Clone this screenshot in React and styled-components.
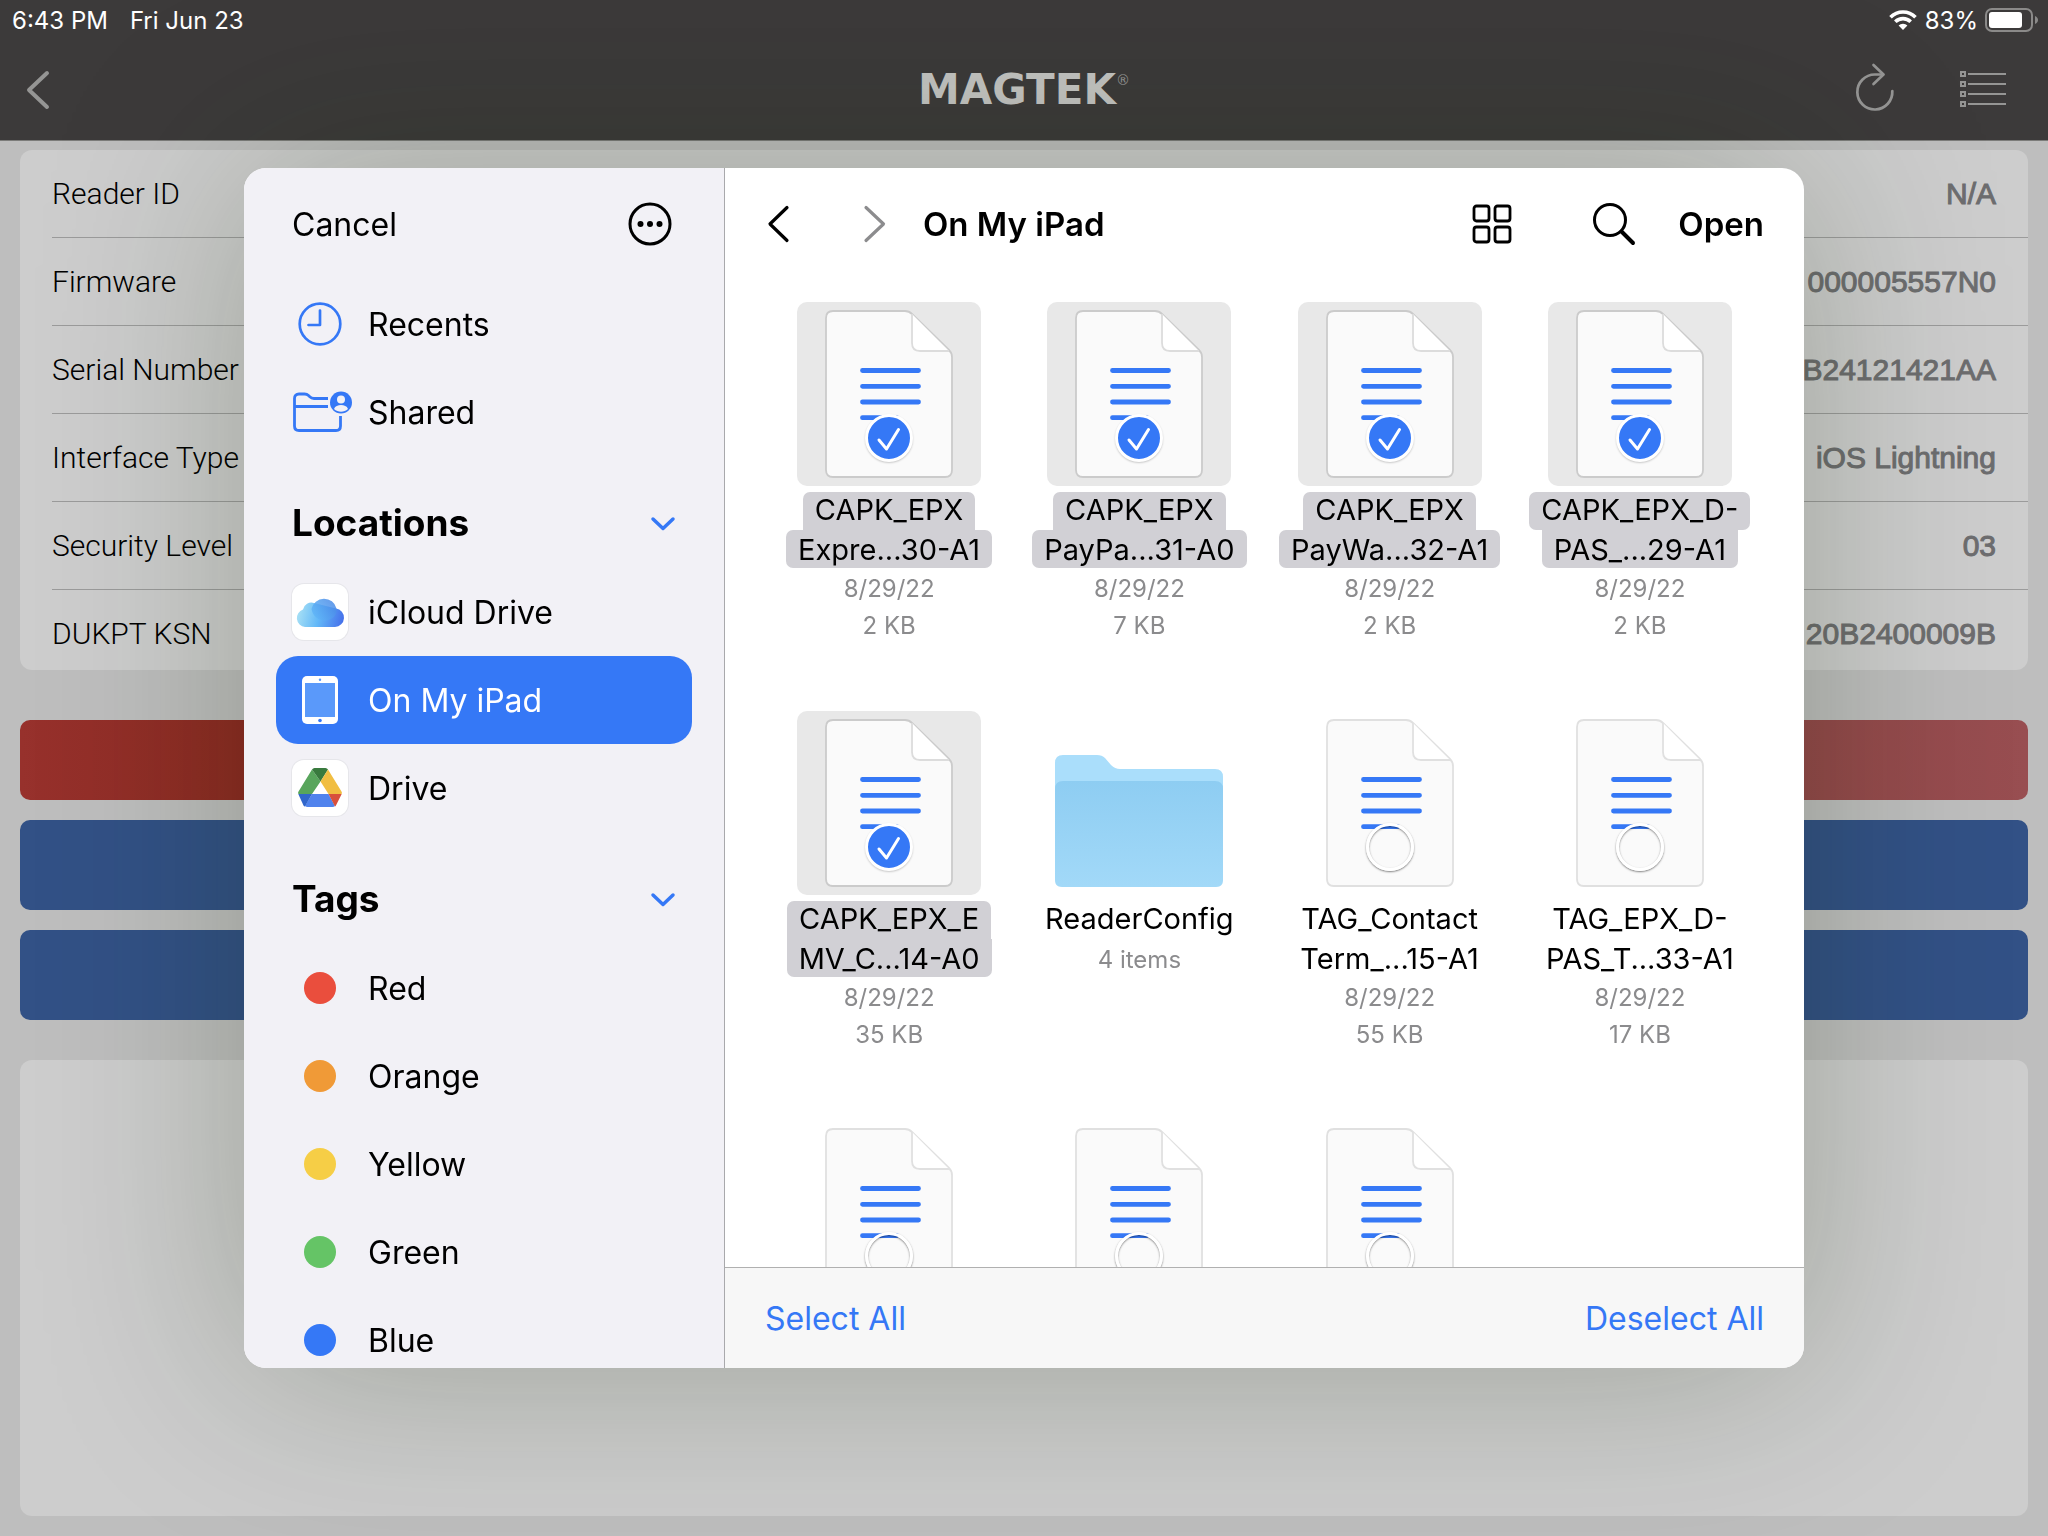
import React, { useState } from 'react';
import styled, { createGlobalStyle } from 'styled-components';

const GlobalStyle = createGlobalStyle`
  * {
    box-sizing: border-box;
  }

  body {
    margin: 0;
    font-family: Inter, 'Liberation Sans', sans-serif;
    color: #000;
  }

  button {
    padding: 0;
    border: 0;
    background: none;
    color: inherit;
    font: inherit;
    cursor: pointer;
  }

  svg {
    display: block;
    flex: none;
    overflow: visible;
  }
`;

/* ---------- app behind the sheet ---------- */

const Page = styled.div`
  display: flex;
  flex-direction: column;
  height: 100vh;
  overflow: hidden;
  background: #bebebe;
`;

const Header = styled.header`
  height: 141px;
  background: #3c3a3a;
  border-bottom: 1px solid #7c7c7a;
`;

const StatusBar = styled.div`
  display: flex;
  align-items: center;
  height: 40px;
  padding: 0 10px 0 12px;
  gap: 22px;
  color: #fff;
  font-size: 24px;
`;

const StatusRight = styled.div`
  display: flex;
  align-items: center;
  gap: 8px;
  margin-left: auto;
`;

const NavBar = styled.nav`
  display: grid;
  grid-template-columns: 1fr auto 1fr;
  align-items: center;
  height: 100px;
  color: #959594;
`;

const NavBack = styled.button`
  justify-self: start;
  margin-left: 26px;
`;

const NavActions = styled.div`
  display: flex;
  align-items: center;
  gap: 66px;
  justify-self: end;
  margin-right: 42px;
`;

const Logo = styled.div`
  display: flex;
  color: #c4c4c2;
  font-family: 'DejaVu Sans', sans-serif;
  font-size: 42px;
  font-weight: 700;
  line-height: 40px;

  sup {
    font-size: 14px;
    font-weight: 400;
    line-height: 20px;
    color: #959594;
  }
`;

const Content = styled.main`
  display: flex;
  flex-direction: column;
  flex: 1;
  gap: 20px;
  padding: 9px 20px 20px;
`;

const InfoList = styled.dl`
  height: 520px;
  margin: 0 0 30px;
  overflow: hidden;
  background: #cdcdcd;
  border-radius: 12px;
`;

const InfoRow = styled.div`
  display: flex;
  align-items: center;
  justify-content: space-between;
  height: 88px;
  margin-left: 32px;
  padding-right: 32px;
  border-bottom: 1px solid #9b9b9b;
  font-size: 30px;

  dt {
    font-family: Roboto, 'Liberation Sans', sans-serif;
    font-weight: 300;
  }

  dd {
    margin: 0;
    color: #6d6d6f;
    font-family: 'Liberation Sans', sans-serif;
    -webkit-text-stroke: 1px #6d6d6f;
  }
`;

const ActionButton = styled.button`
  flex: none;
  height: ${p => (p.$danger ? 80 : 90)}px;
  border-radius: 10px;
  background: ${p => (p.$danger ? 'linear-gradient(90deg, #97312c, #8c2a22 12%, #93484a 88%, #984e51)' : '#325186')};
`;

const Output = styled.textarea`
  flex: 1;
  margin-top: 20px;
  border: 0;
  border-radius: 12px;
  background: #cdcdcd;
  resize: none;
`;

/* ---------- file picker sheet ---------- */

const Overlay = styled.div`
  position: fixed;
  inset: 0;
  display: flex;
  align-items: center;
  justify-content: center;
`;

const Sheet = styled.section`
  display: flex;
  width: 1560px;
  max-width: 100%;
  height: 1200px;
  max-height: 100%;
  overflow: hidden;
  background: #fff;
  border-radius: 22px;
  box-shadow: 0 0 200px rgba(20, 40, 0, 0.26);
`;

const Sidebar = styled.aside`
  flex: none;
  width: 481px;
  padding: 0 32px;
  overflow: hidden;
  background: #f2f1f6;
  border-right: 1px solid #a9a9ac;
`;

const SidebarTop = styled.div`
  display: flex;
  align-items: center;
  justify-content: space-between;
  height: 112px;
  padding: 0 20px 0 16px;
  font-size: 32px;
`;

const SectionTitle = styled.h2`
  display: flex;
  align-items: center;
  justify-content: space-between;
  height: 112px;
  margin: 0;
  padding: 20px 16px 0;
  font-size: 37px;
  font-weight: 700;
`;

const SideItem = styled.button`
  display: flex;
  align-items: center;
  gap: 20px;
  width: 100%;
  height: 88px;
  padding: 0 16px;
  border-radius: 22px;
  font-size: 32px;
  text-align: left;
  background: ${p => (p.$active ? '#3578f6' : 'transparent')};
  color: ${p => (p.$active ? '#fff' : '#000')};
`;

const IconBox = styled.span`
  display: flex;
  flex: none;
  justify-content: center;
  width: 56px;
`;

const AppIcon = styled.span`
  display: block;
  flex: none;
  width: 56px;
  height: 56px;
  border-radius: 12px;
  background: #fff;
  box-shadow: 0 0 0 1px #e6e6ea;
`;

const Dot = styled.span`
  width: 32px;
  height: 32px;
  border-radius: 50%;
  background: ${p => p.$color};
`;

const Browser = styled.div`
  display: flex;
  flex-direction: column;
  flex: 1;
  min-width: 0;
`;

const Toolbar = styled.div`
  display: flex;
  flex: none;
  align-items: center;
  height: 112px;
  padding: 0 40px;
  font-size: 33px;
  font-weight: 600;
`;

const History = styled.div`
  display: flex;
  gap: 74px;
  margin-right: 36px;
`;

const Title = styled.h1`
  flex: 1;
  margin: 0;
  font-size: inherit;
  font-weight: inherit;
`;

const Tools = styled.div`
  display: flex;
  align-items: center;
  gap: 80px;
  margin-right: 42px;
`;

const FileGrid = styled.div`
  display: grid;
  flex: 1;
  grid-template-columns: repeat(4, 1fr);
  grid-auto-rows: 342px;
  row-gap: 67px;
  min-height: 0;
  padding: 22px 39px 0;
  overflow: hidden;
`;

const FileItem = styled.label`
  display: flex;
  flex-direction: column;
  align-items: center;
  white-space: nowrap;
`;

const Thumb = styled.span`
  position: relative;
  display: block;
  width: 184px;
  height: 184px;
  margin-bottom: 6px;
  border-radius: 10px;
  background: ${p => (p.$selected ? '#e8e8e8' : 'transparent')};
`;

const Tick = styled.input`
  position: absolute;
  top: 112px;
  left: 68px;
  width: 48px;
  height: 48px;
  margin: 0;
  appearance: none;
  border: 3px solid #fff;
  border-radius: 50%;
  box-shadow: 0 1px 2px rgba(0, 0, 0, 0.5), inset 0 1px 2px rgba(0, 0, 0, 0.5);

  &:checked {
    background: #3578f6;
    box-shadow: 0 1px 2px rgba(0, 0, 0, 0.2);
  }
`;

const TickMark = styled.svg`
  position: absolute;
  top: 112px;
  left: 68px;
  pointer-events: none;
`;

// the narrower line has square corners where it meets the wider one
const NameLine = styled.span`
  height: 38px;
  padding: ${p => (p.$second ? '2px 12px 0' : '0 12px 2px')};
  border-radius: ${p => (p.$joined ? (p.$second ? '0 0 7px 7px' : '7px 7px 0 0') : '7px')};
  background: ${p => (p.$selected ? '#d1d0d5' : 'transparent')};
  font-size: 29px;
  line-height: 36px;
`;

const Meta = styled.span`
  display: flex;
  flex-direction: column;
  align-items: center;
  margin-top: 2px;
  color: #8b8b8d;
  font-size: 24px;
  line-height: 37px;
`;

const Footer = styled.footer`
  display: flex;
  flex: none;
  align-items: center;
  justify-content: space-between;
  height: 101px;
  padding: 0 40px;
  background: #f7f7f7;
  border-top: 1px solid #b0b0b0;
  color: #3578f6;
  font-size: 32px;
`;

/* ---------- icons ---------- */

const WifiIcon = () => (
  <svg width="28" height="20" viewBox="0 0 28 20" fill="none" stroke="#fff" strokeWidth="3.6">
    <path d="M1.5 7.2A17.5 17.5 0 0 1 26.500 7.200" />
    <path d="M6.300 11.800A11 11 0 0 1 21.700 11.800" />
    <path d="M9.600 15.600A6 6 0 0 1 18.400 15.600L14 20Z" fill="#fff" stroke="none" />
  </svg>
);

const BatteryIcon = () => (
  <svg width="52" height="24" viewBox="0 0 52 24">
    <rect x="0" y="1" width="46" height="22" rx="6" fill="none" stroke="#8b8a89" strokeWidth="2" />
    <rect x="3" y="4" width="33" height="16" rx="3" fill="#fff" />
    <path d="M49 8c4 1.500 4 6.500 0 8z" fill="#8b8a89" />
  </svg>
);

const NavBackIcon = () => (
  <svg width="24" height="40" viewBox="0 0 24 40" fill="none" stroke="currentColor" strokeWidth="4" strokeLinecap="round" strokeLinejoin="round">
    <path d="M21 3L3 20l18 17" />
  </svg>
);

const RefreshIcon = () => (
  <svg width="38" height="50" viewBox="0 0 38 50" fill="none" stroke="currentColor" strokeWidth="2.700" strokeLinecap="round" strokeLinejoin="round">
    <path d="M36.300 26A17.500 17.500 0 1 1 18.800 9.500H27" />
    <path d="M17.500 0l10 9.500-10 9.500" />
  </svg>
);

const ListIcon = () => (
  <svg width="46" height="38" viewBox="0 0 46 38" fill="none" stroke="currentColor" strokeWidth="2">
    {[3, 13, 23, 33].map(y => (
      <g key={y}>
        <rect x="1" y={y - 2} width="4" height="4" />
        <path d={`M8 ${y}h38`} />
      </g>
    ))}
  </svg>
);

const MoreIcon = () => (
  <svg width="44" height="44" viewBox="0 0 44 44">
    <circle cx="22" cy="22" r="20" fill="none" stroke="#000" strokeWidth="3" />
    <circle cx="12.500" cy="22" r="3" />
    <circle cx="22" cy="22" r="3" />
    <circle cx="31.500" cy="22" r="3" />
  </svg>
);

const ClockIcon = () => (
  <svg width="44" height="44" viewBox="0 0 44 44" fill="none" stroke="#3578f6" strokeWidth="2.700" strokeLinecap="round" strokeLinejoin="round">
    <circle cx="22" cy="22" r="20.300" />
    <path d="M22 8.500V23H10.500" />
  </svg>
);

const SharedIcon = () => (
  <svg width="56" height="42" viewBox="0 0 56 42">
    <g fill="none" stroke="#3578f6" strokeWidth="2.800">
      <path d="M36 7.500H22c-2 0-3-.5-4.500-2l-1-1C15.300 3.300 14.300 3 12.500 3H7C4 3 2.500 4.500 2.500 7.500V35c0 3 1.500 4.500 4.500 4.500h37c3 0 4.500-1.500 4.500-4.500V25" />
      <path d="M2.500 15.500H36" />
    </g>
    <circle cx="49" cy="11.500" r="11" fill="#3578f6" />
    <circle cx="49" cy="8.500" r="4" fill="#f2f1f6" />
    <path d="M42 18c1-3 4-4 7-4s6 1 7 4c-4 3.500-10 3.500-14 0z" fill="#f2f1f6" />
  </svg>
);

const ChevronDown = () => (
  <svg width="24" height="16" viewBox="0 0 24 16" fill="none" stroke="#3578f6" strokeWidth="3.500" strokeLinecap="round" strokeLinejoin="round">
    <path d="M1 5l10 9.500L21 5" />
  </svg>
);

const CloudIcon = () => (
  <svg width="56" height="56" viewBox="0 0 56 56">
    <defs>
      <linearGradient id="cloud" gradientUnits="userSpaceOnUse" x1="6" y1="30" x2="51" y2="40">
        <stop offset="0" stopColor="#a4def5" />
        <stop offset="0.450" stopColor="#62b8f8" />
        <stop offset="1" stopColor="#456fea" />
      </linearGradient>
      <linearGradient id="cloudTop" gradientUnits="userSpaceOnUse" x1="20" y1="34" x2="44" y2="18">
        <stop offset="0" stopColor="#62baf9" />
        <stop offset="1" stopColor="#4887e6" />
      </linearGradient>
    </defs>
    <path d="M13 43a9 9 0 0 1-2-17.500A8.500 8.500 0 0 1 22 19l22 5.500A9.300 9.300 0 0 1 43 43z" fill="url(#cloud)" />
    <path d="M19.500 25a12.800 12.800 0 0 1 25-.5c.5 6-3 11-11 12-8 0-13-5-14-11.500z" fill="url(#cloudTop)" opacity="0.850" />
  </svg>
);

const IPadIcon = () => (
  <svg width="36" height="48" viewBox="0 0 36 48">
    <rect width="36" height="48" rx="5" fill="#fff" />
    <rect x="3" y="7" width="30" height="34" fill="#5a99fa" />
    <circle cx="18" cy="3.800" r="1.200" fill="#5a99fa" />
    <circle cx="18" cy="44.500" r="1.800" fill="#3578f6" />
  </svg>
);

const DriveIcon = () => (
  <svg width="56" height="56" viewBox="0 0 56 56">
    <path d="M20 9.500L28.500 21.500 20 34H6.500q-1-1 0-2.500z" fill="#58a55c" />
    <path d="M20 9.500Q21 8 22.500 8h11q1.500 0 2.500 1.500L28.500 21.500z" fill="#397a3e" />
    <path d="M36 9.500L49.500 31.500q1 1.500 0 2.500H36.500L28.500 21.500z" fill="#f1be42" />
    <path d="M20 34h16.500L43 46q-1 1-2.500 1h-25q-1.500 0-2.500-1z" fill="#5083ed" />
    <path d="M6.300 34H20l-7 12.500q-1 0-1.500-1z" fill="#3166cb" />
    <path d="M36.500 34h13.200l-5.500 11q-.5 1-1.200 1.500z" fill="#d8503c" />
  </svg>
);

const Chevron = ({ forward }) => (
  <svg width="24" height="40" viewBox="0 0 24 40" fill="none" stroke={forward ? '#8c8c8e' : '#000'} strokeWidth="3.200" strokeLinecap="round" strokeLinejoin="round">
    <path d={forward ? 'M3 3.500L20.500 20 3 36.500' : 'M22 3.500L5 20l17 16.500'} />
  </svg>
);

const GridIcon = () => (
  <svg width="40" height="40" viewBox="0 0 40 40" fill="none" stroke="#000" strokeWidth="2.800">
    <rect x="2" y="2" width="15" height="15" rx="2.500" />
    <rect x="23" y="2" width="15" height="15" rx="2.500" />
    <rect x="2" y="23" width="15" height="15" rx="2.500" />
    <rect x="23" y="23" width="15" height="15" rx="2.500" />
  </svg>
);

const SearchIcon = () => (
  <svg width="44" height="44" viewBox="0 0 44 44" fill="none" stroke="#000" strokeWidth="3" strokeLinecap="round">
    <circle cx="18" cy="18" r="15.500" />
    <path d="M29.500 29.500L41 41" strokeWidth="4" />
  </svg>
);

const DocumentArt = ({ selected }) => (
  <svg width="184" height="184" viewBox="0 0 184 184">
    <path
      d="M36 9H108Q112 9 115 12L152 48Q155 51 155 55V168Q155 175 148 175H36Q29 175 29 168V16Q29 9 36 9Z"
      fill="#fafafa"
      stroke={selected ? '#cbcbcb' : '#e0e0e0'}
      strokeWidth="1.800"
    />
    <path d="M115 12V41Q115 49 123 49H152" fill="#fff" stroke={selected ? '#dcdcdc' : '#e0e0e0'} strokeWidth="1.800" />
    <path d="M65.500 68.500h56M65.500 84.300h56M65.500 100h56M65.500 115.700h34" stroke="#3578f6" strokeWidth="4.800" strokeLinecap="round" />
  </svg>
);

const FolderArt = () => (
  <svg width="184" height="184" viewBox="0 0 184 184">
    <defs>
      <linearGradient id="folder" x1="0" y1="0" x2="0" y2="1">
        <stop offset="0" stopColor="#8ecdf2" />
        <stop offset="1" stopColor="#a2d9f8" />
      </linearGradient>
    </defs>
    <path d="M8 52Q8 44 16 44H50Q55 44 58 47L64 54Q68 58 73 58H168Q176 58 176 66V120H8Z" fill="#aadefb" />
    <path d="M8 78Q8 70 16 70H168Q176 70 176 78V169Q176 176 169 176H15Q8 176 8 169Z" fill="url(#folder)" />
  </svg>
);

/* ---------- data ---------- */

const readerInfo = [
  ['Reader ID', 'N/A'],
  ['Firmware', '000005557N0'],
  ['Serial Number', 'B24121421AA'],
  ['Interface Type', 'iOS Lightning'],
  ['Security Level', '03'],
  ['DUKPT KSN', '20B2400009B'],
];

const tags = [
  ['Red', '#ea4e3d'],
  ['Orange', '#f09a37'],
  ['Yellow', '#f6ce46'],
  ['Green', '#65c466'],
  ['Blue', '#3578f6'],
];

const files = [
  { name: ['CAPK_EPX', 'Expre...30-A1'], meta: ['8/29/22', '2 KB'], joined: [true, false], checked: true },
  { name: ['CAPK_EPX', 'PayPa...31-A0'], meta: ['8/29/22', '7 KB'], joined: [true, false], checked: true },
  { name: ['CAPK_EPX', 'PayWa...32-A1'], meta: ['8/29/22', '2 KB'], joined: [true, false], checked: true },
  { name: ['CAPK_EPX_D-', 'PAS_...29-A1'], meta: ['8/29/22', '2 KB'], joined: [false, true], checked: true },
  { name: ['CAPK_EPX_E', 'MV_C...14-A0'], meta: ['8/29/22', '35 KB'], joined: [true, true], checked: true },
  { name: ['ReaderConfig'], meta: ['4 items'], folder: true },
  { name: ['TAG_Contact', 'Term_...15-A1'], meta: ['8/29/22', '55 KB'], joined: [true, true] },
  { name: ['TAG_EPX_D-', 'PAS_T...33-A1'], meta: ['8/29/22', '17 KB'], joined: [true, true] },
  { name: [], meta: [] },
  { name: [], meta: [] },
  { name: [], meta: [] },
];

const File = ({ file, selected, onToggle }) => {
  if (file.folder) {
    return (
      <FileItem as="div">
        <Thumb><FolderArt /></Thumb>
        {file.name.map(line => <NameLine key={line}>{line}</NameLine>)}
        <Meta>{file.meta.map(line => <span key={line}>{line}</span>)}</Meta>
      </FileItem>
    );
  }

  return (
    <FileItem>
      <Thumb $selected={selected}>
        <DocumentArt selected={selected} />
        <Tick type="checkbox" checked={selected} onChange={onToggle} />
        {selected && (
          <TickMark width="48" height="48" viewBox="0 0 48 48" fill="none" stroke="#fff" strokeWidth="3" strokeLinecap="round" strokeLinejoin="round">
            <path d="M14 26l7.500 9L33.500 15.500" />
          </TickMark>
        )}
      </Thumb>
      {file.name.map((line, index) => (
        <NameLine key={line} $selected={selected} $second={index > 0} $joined={file.joined[index]}>{line}</NameLine>
      ))}
      <Meta>{file.meta.map(line => <span key={line}>{line}</span>)}</Meta>
    </FileItem>
  );
};

const App = () => {
  const [selected, setSelected] = useState(files.map(file => !!file.checked));

  const toggle = index => setSelected(selected.map((value, i) => (i === index ? !value : value)));
  const setAll = value => setSelected(files.map(file => !file.folder && value));

  return (
    <>
      <GlobalStyle />
      <Page>
        <Header>
          <StatusBar>
            <span>6:43 PM</span>
            <span>Fri Jun 23</span>
            <StatusRight>
              <WifiIcon />
              <span>83%</span>
              <BatteryIcon />
            </StatusRight>
          </StatusBar>
          <NavBar>
            <NavBack aria-label="Back"><NavBackIcon /></NavBack>
            <Logo>MAGTEK<sup>®</sup></Logo>
            <NavActions>
              <button aria-label="Refresh"><RefreshIcon /></button>
              <button aria-label="Menu"><ListIcon /></button>
            </NavActions>
          </NavBar>
        </Header>
        <Content>
          <InfoList>
            {readerInfo.map(([label, value]) => (
              <InfoRow key={label}>
                <dt>{label}</dt>
                <dd>{value}</dd>
              </InfoRow>
            ))}
          </InfoList>
          <ActionButton $danger aria-label="Disconnect" />
          <ActionButton aria-label="Load" />
          <ActionButton aria-label="Send" />
          <Output readOnly aria-label="Output" />
        </Content>
      </Page>

      <Overlay>
        <Sheet>
          <Sidebar>
            <SidebarTop>
              <button>Cancel</button>
              <button aria-label="More"><MoreIcon /></button>
            </SidebarTop>
            <SideItem><IconBox><ClockIcon /></IconBox>Recents</SideItem>
            <SideItem><IconBox><SharedIcon /></IconBox>Shared</SideItem>
            <SectionTitle>
              Locations
              <button aria-label="Toggle locations"><ChevronDown /></button>
            </SectionTitle>
            <SideItem><AppIcon><CloudIcon /></AppIcon>iCloud Drive</SideItem>
            <SideItem $active><IconBox><IPadIcon /></IconBox>On My iPad</SideItem>
            <SideItem><AppIcon><DriveIcon /></AppIcon>Drive</SideItem>
            <SectionTitle>
              Tags
              <button aria-label="Toggle tags"><ChevronDown /></button>
            </SectionTitle>
            {tags.map(([name, color]) => (
              <SideItem key={name}>
                <IconBox><Dot $color={color} /></IconBox>
                {name}
              </SideItem>
            ))}
          </Sidebar>

          <Browser>
            <Toolbar>
              <History>
                <button aria-label="Back"><Chevron /></button>
                <button aria-label="Forward"><Chevron forward /></button>
              </History>
              <Title>On My iPad</Title>
              <Tools>
                <button aria-label="View"><GridIcon /></button>
                <button aria-label="Search"><SearchIcon /></button>
              </Tools>
              <button>Open</button>
            </Toolbar>
            <FileGrid>
              {files.map((file, index) => (
                <File key={index} file={file} selected={selected[index]} onToggle={() => toggle(index)} />
              ))}
            </FileGrid>
            <Footer>
              <button onClick={() => setAll(true)}>Select All</button>
              <button onClick={() => setAll(false)}>Deselect All</button>
            </Footer>
          </Browser>
        </Sheet>
      </Overlay>
    </>
  );
};

export default App;
